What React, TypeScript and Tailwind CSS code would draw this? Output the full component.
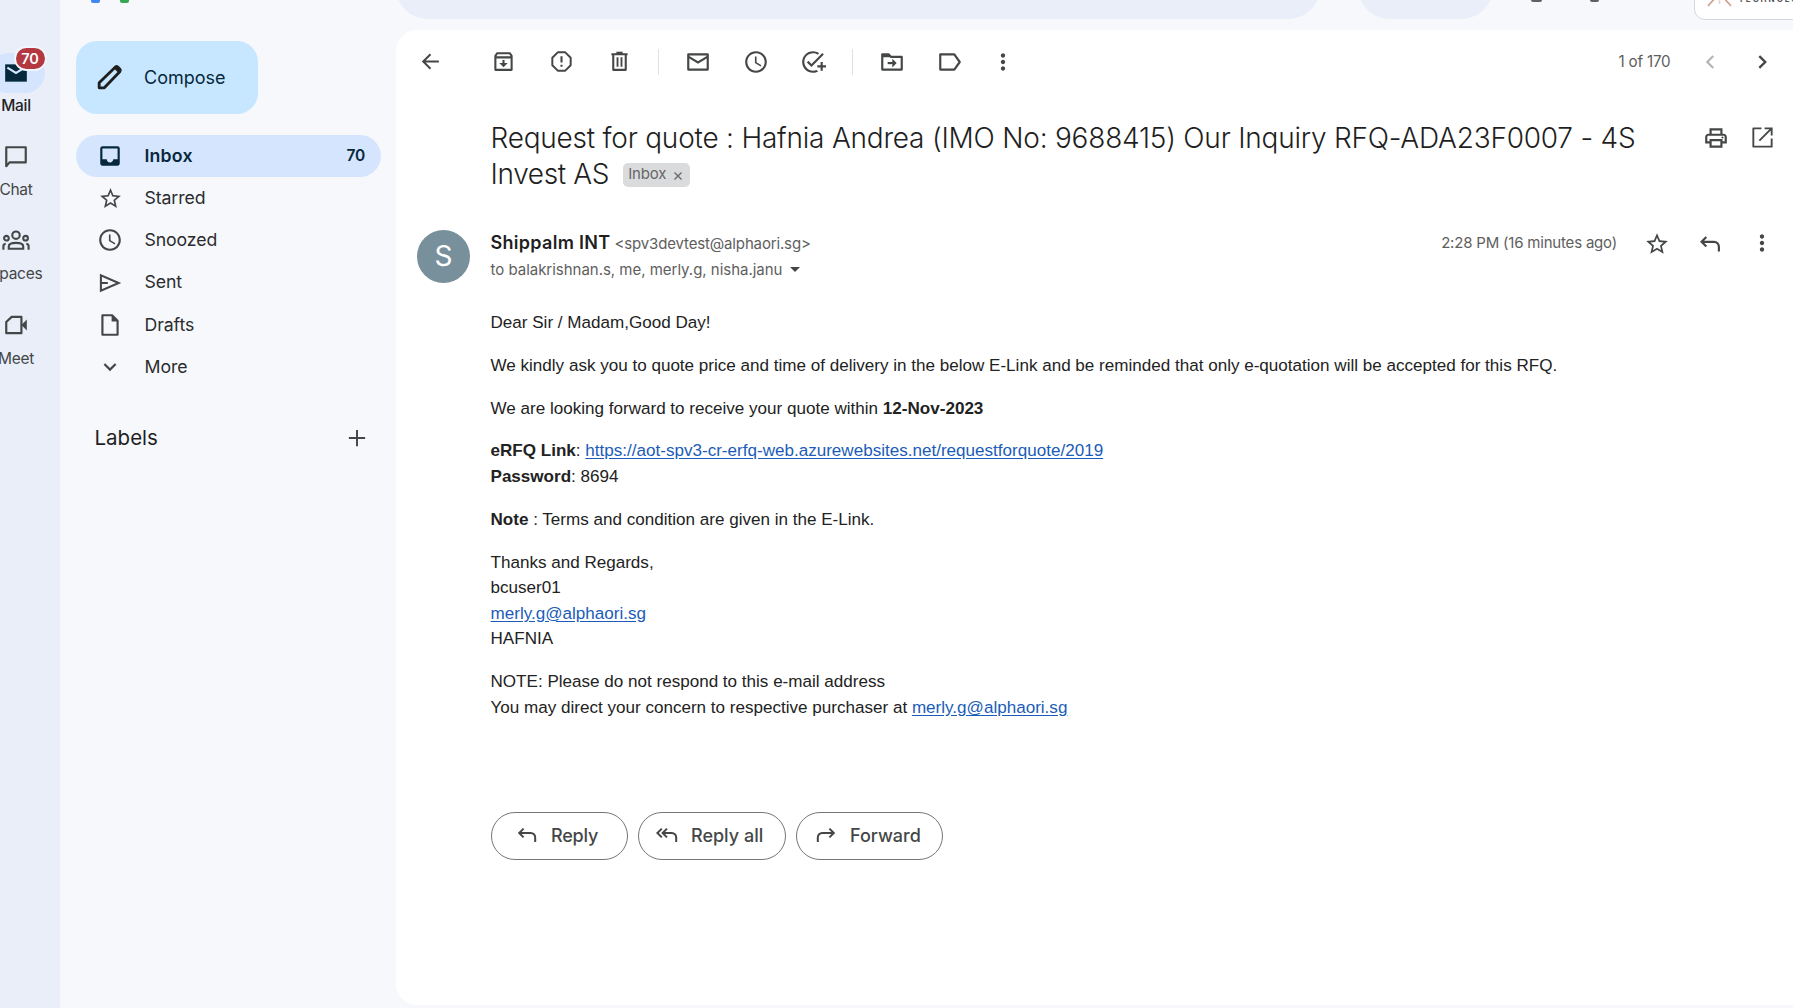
import type { ReactNode } from "react";
import {
  MdAccessTime,
  MdAddTask,
  MdInbox,
  MdMoreVert,
  MdOutlineLocalPrintshop,
  MdStarBorder,
} from "react-icons/md";

function Icon({ children, className = "size-[26px]" }: { children: ReactNode; className?: string }) {
  return (
    <svg
      viewBox="0 0 24 24"
      className={`shrink-0 ${className}`}
      fill="none"
      stroke="currentColor"
      strokeWidth="2"
      strokeLinejoin="miter"
    >
      {children}
    </svg>
  );
}

const BackIcon = () => (
  <Icon className="size-[25px]">
    <path d="M20 12H5.2M12 5L5 12l7 7" strokeWidth="1.9" />
  </Icon>
);
const ArchiveIcon = () => (
  <Icon className="size-[25px]">
    <path d="M4.2 6.5 6 4h12l1.8 2.5V20H4.2zM4.2 8h15.6" strokeLinejoin="round" />
    <path d="M12 10.5v4" />
    <path d="M8 13.5h8L12 17.6z" fill="currentColor" stroke="none" />
  </Icon>
);
const SpamIcon = () => (
  <Icon className="size-[25px]">
    <path d="M8.4 3.2h7.2l5.2 5.2v7.2l-5.2 5.2H8.4l-5.2-5.2V8.4z" strokeLinejoin="round" strokeWidth="1.9" />
    <path d="M12 7v6M12 15v2" />
  </Icon>
);
const TrashIcon = () => (
  <Icon className="size-[25px]">
    <path d="M4.2 5h15.6M6 5v15h12V5" strokeLinejoin="round" />
    <path d="M9 3.7h6" strokeWidth="2.2" />
    <path d="M10.1 8v9M13.9 8v9" strokeWidth="1.8" />
  </Icon>
);
const MailIcon = () => (
  <Icon>
    <path d="M3 5h18v14H3z" strokeLinejoin="round" />
    <path d="M3 7l9 5.5L21 7" />
  </Icon>
);
const MoveIcon = () => (
  <Icon>
    <path d="M3 19V5h6l2 2.3h10V19z" strokeLinejoin="round" />
    <path d="M2.5 4.5h7l2.5 3H3z" fill="currentColor" stroke="none" />
    <path d="M8 13h6" />
    <path d="M12.3 9l4 4-4 4z" fill="currentColor" stroke="none" />
  </Icon>
);
const LabelIcon = () => (
  <Icon>
    <path d="M3 5h13l5 7-5 7H3z" strokeLinejoin="round" />
  </Icon>
);
const OpenIcon = () => (
  <Icon className="size-[25px]">
    <path d="M11 3.2H3.2v17.6h17.6V13" strokeLinejoin="round" strokeWidth="1.8" />
    <path d="M14 3.2h6.8V10M20.5 3.5 9 15" strokeWidth="1.8" />
  </Icon>
);
const ReplyIcon = ({ className }: { className?: string }) => (
  <Icon className={className}>
    <path d="M8.6 5.6 4.2 10l4.4 4.4M4.2 10h11.6a4.4 4.4 0 0 1 4.4 4.4V19" />
  </Icon>
);
const ReplyAllIcon = () => (
  <Icon className="size-6">
    <path d="M6.8 5.6 2.4 10l4.4 4.4M12 5.6 7.6 10l4.4 4.4M7.6 10h9.2a4.4 4.4 0 0 1 4.4 4.4V19" />
  </Icon>
);
const EditIcon = () => (
  <Icon className="size-[31px] text-[#1f1f1f]">
    <path d="M4 20v-4L16.6 3.9q.9-.8 1.8 0l1.7 1.7q.8.9 0 1.8L8 20z" strokeWidth="2.2" strokeLinejoin="round" />
    <path d="M15 4.5 19.5 9l1.2-2.4-3.3-3.3z" fill="currentColor" stroke="none" />
  </Icon>
);

const Slot = ({ children }: { children: ReactNode }) => (
  <div className="flex w-[57.7px] shrink-0 justify-center">{children}</div>
);

const Separator = () => <div className="mx-[10px] h-[26px] w-px shrink-0 bg-[#e0e1e4]" />;

function RailItem({ icon, label, active }: { icon: ReactNode; label: string; active?: boolean }) {
  return (
    <div className={`flex h-[84.2px] w-[72px] flex-col items-center ${active ? "text-[#1f1f1f]" : "text-[#444746]"}`}>
      <div
        className={`relative flex h-[39.5px] w-[57px] items-center justify-center rounded-full ${
          active ? "bg-[#d6e5fe] text-[#06283d]" : ""
        }`}
      >
        {icon}
        {active && (
          <span className="absolute left-[26px] top-[-7px] flex h-[25px] w-[33px] items-center justify-center rounded-full border-2 border-[#f3f6fc] bg-[#b3383f] text-[14.5px] font-semibold text-white">
            70
          </span>
        )}
      </div>
      <div className={`mt-[3.5px] text-[15.5px] leading-5 tracking-[-0.3px] ${active ? "font-medium" : ""}`}>{label}</div>
    </div>
  );
}

function NavItem({ icon, label, count }: { icon: ReactNode; label: string; count?: string }) {
  return (
    <div
      className={`flex h-[42.2px] items-center rounded-full pl-[21px] pr-4 text-[17.7px] ${
        count ? "bg-[#d6e5fe] font-semibold text-[#06283d]" : "text-[#2b2c2e]"
      }`}
    >
      <span className={`flex w-[26px] justify-center ${count ? "" : "text-[#444746]"}`}>{icon}</span>
      <span className={`ml-[21.5px] flex-1 ${count ? "tracking-[0.2px]" : "tracking-[-0.1px]"}`}>{label}</span>
      {count && <span className="text-[15.5px] tracking-[-0.2px]">{count}</span>}
    </div>
  );
}

const Link = ({ children }: { children: ReactNode }) => (
  <a className="text-[#1a5cb8] underline underline-offset-2">{children}</a>
);

const Action = ({ icon, label, className }: { icon: ReactNode; label: string; className: string }) => (
  <button
    className={`flex h-[47.5px] items-center rounded-full border border-[#747775] pb-px text-[18px] font-medium text-[#444746] ${className}`}
  >
    {icon}
    {label}
  </button>
);

export default function App() {
  return (
    <div className="flex h-[1008px] w-[1793px] overflow-hidden bg-[#f6f8fc] font-['Inter',sans-serif] text-[#1f1f1f]">
      <nav className="w-[60px] shrink-0 overflow-hidden bg-[#e9eef9] pt-[53px]">
        <div className="ml-[-20px] w-[72px]">
          <RailItem
            active
            label="Mail"
            icon={
              <Icon>
                <path d="M2 4h20v16H2z" fill="currentColor" stroke="none" />
                <path d="M4 7l8 5 8-5" stroke="#d6e5fe" />
              </Icon>
            }
          />
          <RailItem
            label="Chat"
            icon={
              <Icon>
                <path d="M3 20.5V3h18v14H6z" strokeLinejoin="round" />
              </Icon>
            }
          />
          <RailItem
            label="Spaces"
            icon={
              <Icon className="size-[28px]">
                <g strokeWidth="1.8">
                  <circle cx="12" cy="7" r="3.2" />
                  <circle cx="3.8" cy="9.6" r="2" />
                  <circle cx="20.2" cy="9.6" r="2" />
                  <path d="M5.8 18.6v-2c0-4 12.4-4 12.4 0v2zM1.2 19.5v-3.2c0-1 .8-1.7 2-1.9M22.8 19.5v-3.2c0-1-.8-1.7-2-1.9" />
                </g>
              </Icon>
            }
          />
          <RailItem
            label="Meet"
            icon={
              <Icon>
                <path d="M8 4.5h9v15H3V9.2z" strokeLinejoin="round" />
                <path d="M17 12l5-5v10z" fill="currentColor" stroke="none" />
              </Icon>
            }
          />
        </div>
      </nav>

      <aside className="flex w-[336px] shrink-0 flex-col pl-4">
        <div className="flex h-[40.5px] items-start pl-[15px]">
          <span className="h-[3px] w-[9px] rounded-b-[2px] bg-[#4285f4]" />
          <span className="ml-5 h-[3px] w-[9px] rounded-b-[2px] bg-[#34a853]" />
        </div>
        <button className="flex h-[73.5px] w-[181.5px] items-center rounded-[21px] bg-[#c6e7ff] pl-[18px] text-[18px] text-[#06283d]">
          <EditIcon />
          <span className="ml-[19px]">Compose</span>
        </button>
        <div className="mt-[21px] w-[305px]">
          <NavItem label="Inbox" count="70" icon={<MdInbox size={26} />} />
          <NavItem label="Starred" icon={<MdStarBorder size={25} />} />
          <NavItem label="Snoozed" icon={<MdAccessTime size={26} />} />
          <NavItem
            label="Sent"
            icon={
              <Icon>
                <path d="M3.6 5v14L20 12zM3.6 12H10" strokeWidth="1.9" />
              </Icon>
            }
          />
          <NavItem
            label="Drafts"
            icon={
              <Icon>
                <path d="M5 3h9l5 5v13H5z" strokeLinejoin="round" />
                <path d="M13.5 2.5v6.2h6z" fill="currentColor" stroke="none" />
              </Icon>
            }
          />
          <NavItem
            label="More"
            icon={
              <Icon>
                <path d="M6.8 9.2l5.2 5.2 5.2-5.2" />
              </Icon>
            }
          />
        </div>
        <div className="mt-[34.5px] flex w-[305px] items-center justify-between pl-[18.5px] pr-[11.5px] text-[20.5px]">
          <span>Labels</span>
          <Icon className="size-[26px] text-[#444746]">
            <path d="M12 4.5v15M4.5 12h15" strokeWidth="1.8" />
          </Icon>
        </div>
      </aside>

      <div className="flex min-w-0 flex-1 flex-col">
        <header className="flex h-[30px] shrink-0 items-start overflow-hidden">
          <div className="mt-[-44px] h-[63px] w-[924px] shrink-0 rounded-full bg-[#e9eef9]" />
          <div className="ml-[37.5px] mt-[-44px] h-[63px] w-[135px] shrink-0 rounded-full bg-[#e9eef9]" />
          <div className="ml-[38px] h-[1.5px] w-[11px] shrink-0 rounded-b-full bg-[#5f6062]" />
          <div className="ml-[48px] h-[2px] w-[9px] shrink-0 rounded-b-full bg-[#5f6062]" />
          <div className="ml-[95px] mt-[-30px] flex h-[49.5px] w-[130px] shrink-0 items-end rounded-[11px] border border-[#d5d8e0] bg-white pl-[11px]">
            <svg viewBox="0 0 28 50" className="h-[50px] w-7 shrink-0" fill="none" strokeWidth="1.4">
              <path d="M10 28 2 37M17 28l8 9" stroke="#cf9f92" strokeWidth="1.7" />
              <path d="M13.5 28v7M9 29l4.5-3 4.5 3" stroke="#ead2cc" />
            </svg>
            <span className="ml-[5px] pb-[15px] text-[8px] font-bold leading-[9px] tracking-[2px] text-[#55565a]">
              TECHNOLOGY
            </span>
          </div>
        </header>

        <main className="h-[975px] shrink-0 rounded-l-[21px] bg-white">
          <div className="flex h-[63px] items-center pl-[5.6px] text-[#444746]">
            <Slot>
              <BackIcon />
            </Slot>
            <div className="w-[15.8px] shrink-0" />
            <Slot>
              <ArchiveIcon />
            </Slot>
            <Slot>
              <SpamIcon />
            </Slot>
            <Slot>
              <TrashIcon />
            </Slot>
            <Separator />
            <Slot>
              <MailIcon />
            </Slot>
            <Slot>
              <MdAccessTime size={26} />
            </Slot>
            <Slot>
              <MdAddTask size={26} />
            </Slot>
            <Separator />
            <Slot>
              <MoveIcon />
            </Slot>
            <Slot>
              <LabelIcon />
            </Slot>
            <div className="flex w-[48px] justify-center">
              <MdMoreVert size={26} />
            </div>
            <div className="ml-auto mr-[18px] flex items-center">
              <span className="mr-[26.5px] pt-px text-[15.2px] tracking-[-0.2px] text-[#5e5e5e]">1 of 170</span>
              <span className="flex text-[#b4b5b5]">
                <Icon>
                  <path d="M15 6.5L9.5 12l5.5 5.5" />
                </Icon>
              </span>
              <span className="ml-[26px] flex">
                <Icon>
                  <path d="M9.5 6.5L15 12l-5.5 5.5" strokeWidth="2.2" />
                </Icon>
              </span>
            </div>
          </div>

          <div className="flex pl-[94.5px] pr-[18px] pt-[26.5px]">
            <h1 className="w-[1180px] text-[28px] font-[360] leading-[36.8px] tracking-[-0.22px]">
              Request for quote : Hafnia Andrea (IMO No: 9688415) Our Inquiry RFQ-ADA23F0007 - 4S
              <br />
              <span className="flex items-center">
                <span className="tracking-[-0.35px]">Invest AS</span>
                <span className="ml-[14px] flex h-6 w-[67px] items-center rounded-[5px] bg-[#dadbdc] pl-[5px] text-[15px] font-normal tracking-[-0.2px] text-[#666]">
                  Inbox
                  <Icon className="ml-[6px] mt-[2px] size-3">
                    <path d="M5 5l14 14M19 5 5 19" strokeWidth="2.6" />
                  </Icon>
                </span>
              </span>
            </h1>
            <div className="ml-auto flex h-[36px] items-center gap-[21.5px] text-[#444746]">
              <MdOutlineLocalPrintshop size={26} />
              <OpenIcon />
            </div>
          </div>

          <div className="mt-[36.5px] flex items-start pl-[21px] pr-[18px]">
            <div className="flex size-[53px] shrink-0 items-center justify-center rounded-full bg-[#78909c] text-[28px] text-white">
              S
            </div>
            <div className="ml-[20.5px]">
              <div className="flex items-baseline leading-[26px]">
                <span className="text-[18px] font-semibold tracking-[0.3px]">Shippalm INT</span>
                <span className="ml-1 text-[15px] tracking-[-0.15px] text-[#5e5e5e]">&lt;spv3devtest@alphaori.sg&gt;</span>
              </div>
              <div className="flex items-center text-[15px] leading-[26px] tracking-[-0.02px] text-[#5e5e5e]">
                to balakrishnan.s, me, merly.g, nisha.janu
                <svg viewBox="0 0 10 5" className="ml-[8px] h-[5px] w-[10px]" fill="#444746">
                  <path d="M0 0h10L5 5z" />
                </svg>
              </div>
            </div>
            <div className="ml-auto flex h-[27px] items-center text-[#444746]">
              <span className="text-[15px] tracking-[-0.2px] text-[#5e5e5e]">2:28 PM (16 minutes ago)</span>
              <MdStarBorder size={26} className="ml-[27px] mt-[2px]" />
              <ReplyIcon className="ml-[27px] mt-px size-[26px]" />
              <MdMoreVert size={26} className="ml-[26px]" />
            </div>
          </div>

          <div className="ml-[94.5px] mt-[27.5px] space-y-[17.1px] font-['Liberation_Sans',sans-serif] text-[17.07px] leading-[25.65px] text-[#222]">
            <p>Dear Sir / Madam,Good Day!</p>
            <p>
              We kindly ask you to quote price and time of delivery in the below E-Link and be reminded that only
              e-quotation will be accepted for this RFQ.
            </p>
            <p>
              We are looking forward to receive your quote within <b>12-Nov-2023</b>
            </p>
            <p>
              <b>eRFQ Link</b>: <Link>https://aot-spv3-cr-erfq-web.azurewebsites.net/requestforquote/2019</Link>
              <br />
              <b>Password</b>: 8694
            </p>
            <p>
              <b>Note</b> : Terms and condition are given in the E-Link.
            </p>
            <p>
              Thanks and Regards,
              <br />
              bcuser01
              <br />
              <Link>merly.g@alphaori.sg</Link>
              <br />
              HAFNIA
            </p>
            <p>
              NOTE: Please do not respond to this e-mail address
              <br />
              You may direct your concern to respective purchaser at <Link>merly.g@alphaori.sg</Link>
            </p>
          </div>

          <div className="ml-[94.5px] mt-[91.5px] flex gap-[10px]">
            <Action
              className="w-[137px] gap-3 pl-[23.5px] tracking-[-0.2px]"
              icon={<ReplyIcon className="size-6" />}
              label="Reply"
            />
            <Action className="w-[148.5px] gap-3 pl-[16.5px]" icon={<ReplyAllIcon />} label="Reply all" />
            <Action
              className="w-[147px] gap-3 pl-[17px]"
              icon={<ReplyIcon className="size-6 -scale-x-100" />}
              label="Forward"
            />
          </div>
        </main>
      </div>
    </div>
  );
}
